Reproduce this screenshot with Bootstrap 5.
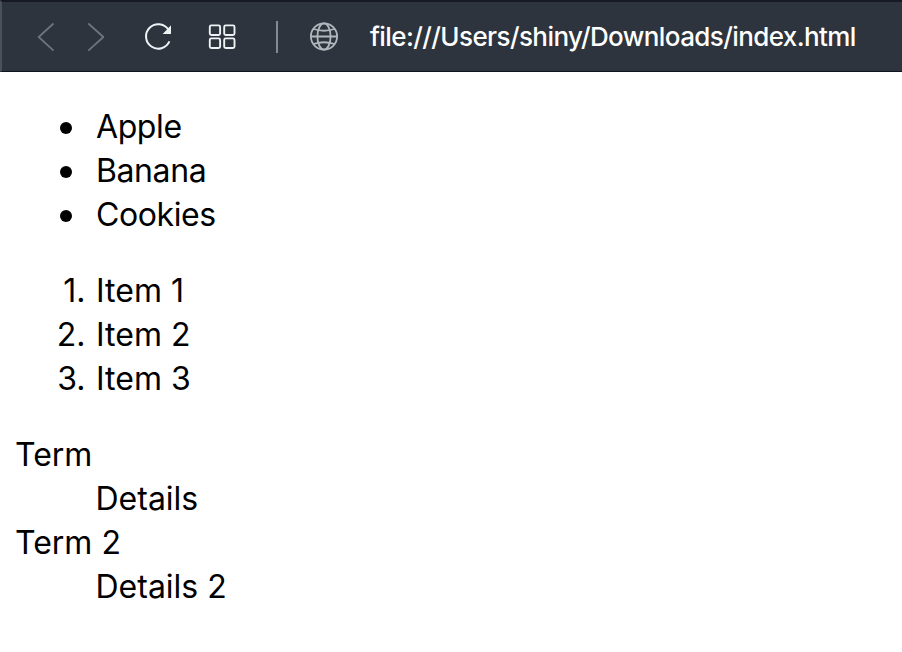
<!DOCTYPE html>
<html lang="en">
<head>
<meta charset="utf-8">
<meta name="viewport" content="width=device-width, initial-scale=1">
<title>index.html</title>
<link href="https://cdn.jsdelivr.net/npm/bootstrap@5.3.0/dist/css/bootstrap.min.css" rel="stylesheet">
<style>
body { font-family: Inter, "Liberation Sans", sans-serif; font-size: 32px; line-height: 44px; color: #000; background: #fff; overflow: hidden; }
.toolbar { height: 72px; background: #2d343d; border-top: 2px solid #171a24; border-bottom: 1px solid #11141b; border-left: 2px solid #4b5159; }
.toolbar svg { display: block; flex: none; }
.icon-history { margin-left: 32px; }
.icon-reload { margin-left: 39px; }
.icon-grid { margin-left: 34px; }
.address { font-size: 26px; line-height: 40px; color: #fff; margin-left: 31px; letter-spacing: -.59px; font-weight: 450; }
.divider { width: 2px; height: 32px; background: #858a91; margin: 0 31px 0 39px; }
.page { padding: 33px 15.5px; }
.page ul, .page ol, .page dl { margin: 0 0 32px; padding: 0; }
.page ul { letter-spacing: -.4px; }
.page li { display: flex; align-items: center; }
.page ul li::before { content: ""; width: 12px; height: 12px; border-radius: 50%; background: #000; margin: 2px 24px 0 44.5px; }
.page ol { counter-reset: item; }
.page ol li::before { counter-increment: item; content: counter(item) "."; width: 70px; margin-right: 10.500px; text-align: right; }
.page dt { font-weight: 400; margin-left: -.5px; }
.page dd { margin: 0 0 0 80px; }
</style>
<script src="https://cdn.jsdelivr.net/npm/bootstrap@5.3.0/dist/js/bootstrap.bundle.min.js"></script>
</head>
<body>
<nav class="toolbar d-flex align-items-center" aria-label="Browser toolbar">
  <svg class="icon-history" width="70" height="40" viewBox="34 16 70 40" fill="none" stroke="#6d747c" stroke-width="1.8"><path d="M53.500 22.5 38.7 36 53.500 49.7M88.3 22.5 103.400 36 88.3 49.7"/></svg>
  <svg class="icon-reload" width="30" height="40" viewBox="143 16 30 40"><path d="M168.3 28.5A12.2 12.2 0 1 0 169.4 40.4" fill="none" stroke="#eef2f5" stroke-width="2"/><path d="M171 24.3V33h-8.3z" fill="#eef2f5"/></svg>
  <svg class="icon-grid" width="30" height="40" viewBox="207 16 30 40" fill="none" stroke="#eef2f5" stroke-width="1.9"><rect x="209.8" y="24.4" width="10.3" height="9.6" rx="1.5"/><rect x="224.2" y="24.4" width="10.3" height="9.6" rx="1.5"/><rect x="209.8" y="37.4" width="10.3" height="9.6" rx="1.5"/><rect x="224.2" y="37.4" width="10.3" height="9.6" rx="1.5"/></svg>
  <div class="divider"></div>
  <svg width="30" height="40" viewBox="309 16 30 40" fill="none" stroke="#b2b7bd" stroke-width="1.8"><circle cx="324" cy="35.500" r="13.1"/><ellipse cx="324" cy="35.500" rx="6.6" ry="13.1"/><path d="M311 35.500h26M313.500 28q10.500 3.500 21 0M313.500 43q10.500-3.500 21 0"/></svg>
  <span class="address text-nowrap">file:///Users/shiny/Downloads/index.html</span>
</nav>
<main class="page">
  <ul class="list-unstyled"><li>Apple</li><li>Banana</li><li>Cookies</li></ul>
  <ol class="list-unstyled"><li>Item 1</li><li>Item 2</li><li>Item 3</li></ol>
  <dl><dt>Term</dt><dd>Details</dd><dt>Term 2</dt><dd>Details 2</dd></dl>
</main>
</body>
</html>
